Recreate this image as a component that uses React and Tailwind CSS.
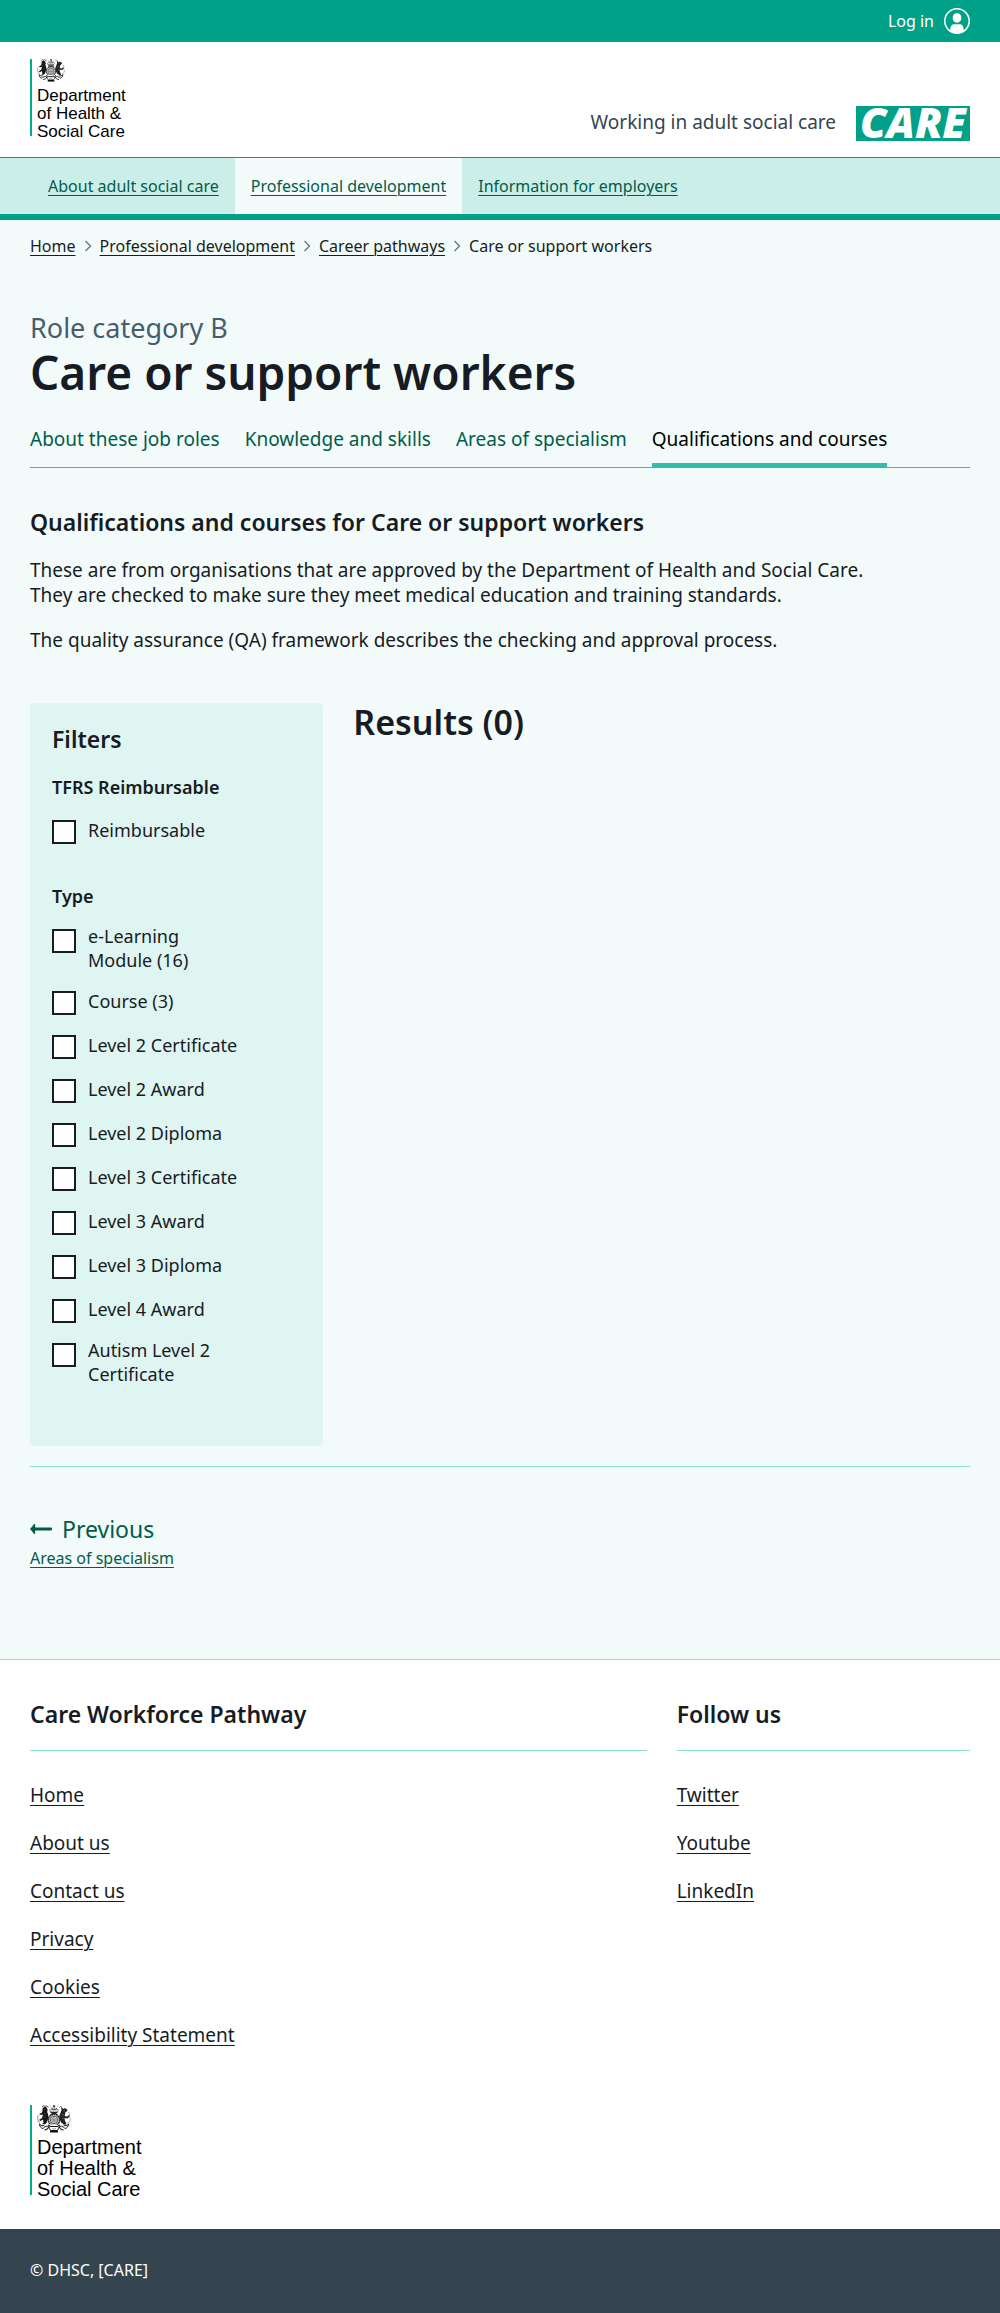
import React, { useId } from "react";

const navItems = [
  { label: "About adult social care" },
  { label: "Professional development", active: true },
  { label: "Information for employers" },
];

const crumbs = ["Home", "Professional development", "Career pathways"];

const tabs = [
  { label: "About these job roles" },
  { label: "Knowledge and skills" },
  { label: "Areas of specialism" },
  { label: "Qualifications and courses", active: true },
];

const typeFilters = [
  "e-Learning Module (16)",
  "Course (3)",
  "Level 2 Certificate",
  "Level 2 Award",
  "Level 2 Diploma",
  "Level 3 Certificate",
  "Level 3 Award",
  "Level 3 Diploma",
  "Level 4 Award",
  "Autism Level 2 Certificate",
];

const footerColumns = [
  {
    title: "Care Workforce Pathway",
    wide: true,
    links: ["Home", "About us", "Contact us", "Privacy", "Cookies", "Accessibility Statement"],
  },
  { title: "Follow us", links: ["Twitter", "Youtube", "LinkedIn"] },
];

function Crest({ className }) {
  return (
    <svg viewBox="0 0 68 56" className={className} aria-hidden="true">
      {/* crown */}
      <path d="M34 0v5M31.5 2.2h5" stroke="#111" strokeWidth="1.6" />
      <path d="M27 14c-3-5 1-8 7-8s10 3 7 8z" fill="none" stroke="#111" strokeWidth="1.6" strokeDasharray="2.4 1" />
      <path d="M29 9.5h10M27 15h14" stroke="#111" strokeWidth="1.8" />
      <path d="M20 2.5l4 3M44 5.500l4-3M25 1.500l2 2M43 1.500l-2 2" stroke="#555" strokeWidth="1.2" />
      {/* shield and garter */}
      <circle cx="34" cy="30" r="11.500" fill="#bbb" stroke="#111" strokeWidth="2.4" strokeDasharray="3.500 .8" />
      <circle cx="34" cy="30" r="7.500" fill="#ddd" stroke="#333" strokeWidth="1.3" />
      <path d="M34 22.500v15M26.500 30h15M29 25.500l3 2M36 33l4 2M29 34.500l3-1.500M37 27l3-2" stroke="#444" strokeWidth="1.2" />
      <path d="M27 19c4-3 10-3 14 0" fill="none" stroke="#111" strokeWidth="2" />
      {/* lion */}
      <path d="M11 7c2-4 8-4 9 0 2 2 1 5 0 7 3 4 3 9 2 14l-3 8-6 5-4-1 4-5-1-6-5 3-3-2 6-4 2-7-4 1-4-2 6-3 1-3z" fill="#161616" />
      <path d="M3 20c-3 3-1 7-1 10s1 5 4 5M13 9l3 1M14 17l4 2M13 24l5 1" fill="none" stroke="#555" strokeWidth="1.3" />
      <path d="M10 4l3-2.500 3 1.500 3-1.500 2 3" fill="none" stroke="#111" strokeWidth="1.4" />
      {/* unicorn */}
      <path d="M48 2l4 6c3-3 8-1 9 3l-3 3-2 1c1 3 0 5-1 7l5 1 4-3 2 2-5 5-6-1 1 6 3 5-3 3-7-4-4-8c-1-5 0-9 2-12l2-6z" fill="#222" />
      <path d="M53 11l3 1M49 20l5-1M50 26l5 1M63 14c3 4 3 7 1 10 4 3 3 8 0 11l-3 1" fill="none" stroke="#777" strokeWidth="1.3" />
      {/* motto ribbon */}
      <path d="M5 38c0 5 3 8 7 9 3-4 8-6 12-3 1 4 2 6 4 7h12c2-1 3-3 4-7 4-3 9-1 12 3 4-1 7-4 7-9-3 3-7 5-10 2M5 38c3 3 7 5 10 2" fill="#fff" stroke="#111" strokeWidth="2" strokeLinejoin="round" />
      <path d="M24 44c-2 3-5 6-9 6M44 44c2 3 5 6 9 6M22 40l5 3h14l5-3" fill="none" stroke="#111" strokeWidth="2.200" />
      <path d="M26 53h16" stroke="#111" strokeWidth="4" />
      <path d="M17 44l4-1M47 43l4 1M30 47.500h8" stroke="#666" strokeWidth="1.200" />
    </svg>
  );
}

function HeaderLogo() {
  return (
    <a href="#" className="flex items-start gap-[5px] font-['Liberation_Sans',Arial,sans-serif] text-[17px] leading-[18px] text-black">
      <span className="h-[77px] w-[2px] bg-[#00ad93]" />
      <span>
        <Crest className="mb-[5px] block h-[23px] w-[28px]" />
        Department
        <br />
        of Health &amp;
        <br />
        Social Care
      </span>
    </a>
  );
}

function FooterLogo() {
  return (
    <a href="#" className="inline-flex items-start gap-[5px] font-['Liberation_Sans',Arial,sans-serif] text-[20px] leading-[21px] text-black">
      <span className="h-[90px] w-[2px] bg-[#00ad93]" />
      <span>
        <Crest className="mb-1 block h-[28px] w-[34px]" />
        Department
        <br />
        of Health &amp;
        <br />
        Social Care
      </span>
    </a>
  );
}

function UserIcon() {
  return (
    <svg viewBox="0 0 26 26" className="size-[26px]" aria-hidden="true">
      <circle cx="13" cy="13" r="12.200" fill="none" stroke="#fff" strokeWidth="1.500" />
      <path d="M13 5.300c-3 0-4.300 2-4.300 4.500 0 2.800 1.500 4.900 4.300 4.900s4.300-2.100 4.300-4.900c0-2.500-1.300-4.500-4.300-4.500z" fill="#fff" />
      <path d="M6.200 23c0-4.500 1.300-6.800 4-6.800h5.600c2.700 0 4 2.300 4 6.800-2 1.300-4.200 2-6.800 2s-4.800-.7-6.800-2z" fill="#fff" />
    </svg>
  );
}

function Chevron() {
  return (
    <svg viewBox="0 0 8 12" className="mx-2 h-3 w-2" aria-hidden="true">
      <path d="M1.500 1l5 5-5 5" fill="none" stroke="#5f7482" strokeWidth="1.300" />
    </svg>
  );
}

function FilterOption({ label }) {
  const id = useId();
  return (
    <div className="flex min-h-[30px] items-start gap-3">
      <input
        id={id}
        type="checkbox"
        className="mt-[5px] size-6 shrink-0 appearance-none border-2 border-[#171c24] bg-white checked:bg-[#171c24]"
      />
      <label htmlFor={id} className="flex min-h-[30px] max-w-[154px] items-center text-[18px] leading-6">
        {label}
      </label>
    </div>
  );
}

function FilterGroup({ title, options, className }) {
  return (
    <fieldset className={className}>
      <legend className="text-[18px] leading-6 font-semibold">{title}</legend>
      <div className="mt-4 flex flex-col gap-[14px]">
        {options.map((o) => (
          <FilterOption key={o} label={o} />
        ))}
      </div>
    </fieldset>
  );
}

export default function App() {
  return (
    <div className="bg-white font-['Noto_Sans',sans-serif] text-[#171c24]">
      <div className="flex h-[42px] items-center justify-end bg-[#00a188] px-[30px]">
        <a href="#" className="flex items-center gap-[10px] text-base leading-6 text-white">
          Log in
          <UserIcon />
        </a>
      </div>

      <header>
        <div className="flex justify-between px-[30px] pt-[17px] pb-4">
          <HeaderLogo />
          <div className="flex min-h-[82px] items-end gap-5">
            <span className="mb-[7px] text-[19px] leading-6 text-[#34454f]">Working in adult social care</span>
            <a
              href="#"
              className="flex h-[35px] w-[114px] items-center justify-center bg-[#00a188] pb-[3px] text-[42px] leading-none font-black text-white italic"
            >
              CARE
            </a>
          </div>
        </div>
        <nav className="flex border-t border-b-[6px] border-t-[#00a188] border-b-[#00a188] bg-[#cceee8] px-8">
          {navItems.map((n) => (
            <a
              key={n.label}
              href="#"
              className={`flex h-14 items-center px-4 text-base leading-6 text-[#005c4b] underline decoration-1 underline-offset-[3px] ${n.active ? "bg-[#f2fbfa]" : ""}`}
            >
              {n.label}
            </a>
          ))}
        </nav>
      </header>

      <main className="bg-[#f2fbfa] px-[30px] pt-[14px] pb-[89px]">
        <nav aria-label="Breadcrumb">
          <ol className="flex items-center text-base leading-6">
            {crumbs.map((c) => (
              <li key={c} className="flex items-center">
                <a href="#" className="underline decoration-1 underline-offset-[3px]">
                  {c}
                </a>
                <Chevron />
              </li>
            ))}
            <li>Care or support workers</li>
          </ol>
        </nav>

        <p className="mt-[52px] text-[27px] leading-9 text-[#465d6f]">Role category B</p>
        <h1 className="text-[46px] leading-[52px] font-semibold">Care or support workers</h1>

        <nav className="mt-[27px] flex gap-[25px] border-b border-[#35bda9]">
          {tabs.map((t) => (
            <a
              key={t.label}
              href="#"
              className={`-mb-px border-b-[5px] pb-[10px] text-[19px] leading-7 ${t.active ? "border-[#35bda9] text-black" : "border-transparent text-[#005c4b]"}`}
            >
              {t.label}
            </a>
          ))}
        </nav>

        <h2 className="mt-[38px] text-[23px] leading-8 font-semibold">
          Qualifications and courses for Care or support workers
        </h2>
        <p className="mt-5 text-[19px] leading-[25px]">
          These are from organisations that are approved by the Department of Health and Social Care.
          <br />
          They are checked to make sure they meet medical education and training standards.
        </p>
        <p className="mt-5 text-[19px] leading-[25px]">
          The quality assurance (QA) framework describes the checking and approval process.
        </p>

        <div className="mt-[50px] grid grid-cols-3 gap-[30px]">
          <form className="rounded bg-[#dff5f1] px-[22px] pt-5 pb-[60px]">
            <h2 className="text-[23px] leading-8 font-semibold">Filters</h2>
            <FilterGroup className="mt-5" title="TFRS Reimbursable" options={["Reimbursable"]} />
            <FilterGroup className="mt-[39px]" title="Type" options={typeFilters} />
          </form>
          <section className="col-span-2">
            <h2 className="text-[34px] leading-[38px] font-semibold">Results (0)</h2>
          </section>
        </div>

        <div className="mt-5 border-t border-[#8ddfd2] pt-[45px]">
          <a href="#" className="inline-flex flex-col items-start text-[#005c4b]">
            <span className="flex items-center gap-[10px] text-[23px] leading-[34px]">
              <svg viewBox="0 0 22 12" className="h-3 w-[22px]" aria-hidden="true">
                <path d="M4 6h16.800" stroke="currentColor" strokeWidth="2.800" strokeLinecap="round" />
                <path d="M0 6l4.300-5q.9-.3.900.7v8.600q0 1-.9.700z" fill="currentColor" />
              </svg>
              Previous
            </span>
            <span className="text-base leading-6 underline decoration-1 underline-offset-[3px]">Areas of specialism</span>
          </a>
        </div>
      </main>

      <footer className="border-t border-[#99e0d3]">
        <div className="px-[30px] pt-[38px] pb-[29px]">
          <div className="grid grid-cols-3 gap-[30px]">
            {footerColumns.map((col) => (
              <section key={col.title} className={col.wide ? "col-span-2" : ""}>
                <h2 className="border-b border-[#8ddfd2] pb-5 text-[23px] leading-8 font-semibold">{col.title}</h2>
                <ul className="mt-[30px] flex flex-col gap-5 text-[19px] leading-7">
                  {col.links.map((l) => (
                    <li key={l}>
                      <a href="#" className="underline decoration-1 underline-offset-[3px]">
                        {l}
                      </a>
                    </li>
                  ))}
                </ul>
              </section>
            ))}
          </div>
          <div className="mt-14 flex">
            <FooterLogo />
          </div>
        </div>
        <div className="bg-[#34454f] px-[30px] pt-[29px] pb-[31px] text-base leading-6 text-white">© DHSC, [CARE]</div>
      </footer>
    </div>
  );
}
